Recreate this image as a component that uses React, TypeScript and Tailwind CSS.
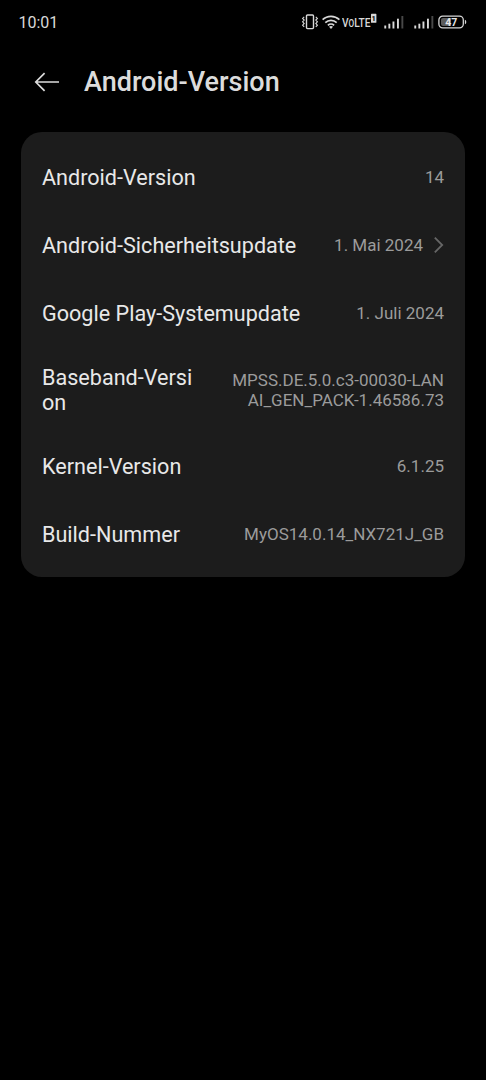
import React from "react";

interface InfoRow {
  label: string;
  value: string;
  link?: boolean;
  tall?: boolean;
}

const rows: InfoRow[] = [
  { label: "Android-Version", value: "14" },
  { label: "Android-Sicherheitsupdate", value: "1. Mai 2024", link: true },
  { label: "Google Play-Systemupdate", value: "1. Juli 2024" },
  { label: "Baseband-Version", value: "MPSS.DE.5.0.c3-00030-LANAI_GEN_PACK-1.46586.73", tall: true },
  { label: "Kernel-Version", value: "6.1.25" },
  { label: "Build-Nummer", value: "MyOS14.0.14_NX721J_GB" },
];

const VibrateIcon = () => (
  <svg width="18" height="18" viewBox="0 0 18 18" fill="none" stroke="#d8d8d8" strokeWidth="1.4">
    <rect x="5.5" y="2" width="7" height="13.6" rx="1" />
    <path d="M3.2 3.8 1.6 5.4l1.6 1.7-1.6 1.7 1.6 1.7-1.6 1.7 1.6 1.6" strokeWidth="1.1" />
    <path d="M14.8 3.8l1.6 1.6-1.6 1.7 1.6 1.7-1.6 1.7 1.6 1.7-1.6 1.6" strokeWidth="1.1" />
  </svg>
);

const WifiIcon = () => (
  <svg width="20" height="18" viewBox="0 0 20 18" fill="none" stroke="#d8d8d8" strokeWidth="1.7">
    <path d="M1.6 6.7a12.2 12.2 0 0 1 16.8 0" />
    <path d="M4.3 9.7a8.2 8.2 0 0 1 11.4 0" />
    <path d="M6.9 12.4a4.5 4.5 0 0 1 6.2 0" />
    <path d="M10 16 8 13.8a3 3 0 0 1 4 0z" fill="#d8d8d8" stroke="none" />
  </svg>
);

const SignalIcon = () => (
  <svg width="20" height="14" viewBox="0 0 20 14" fill="#d8d8d8">
    <rect x="0.3" y="10.5" width="1.9" height="3" />
    <rect x="4.4" y="8.7" width="1.9" height="4.8" />
    <rect x="8.5" y="6.5" width="1.9" height="7" />
    <rect x="13" y="3.7" width="1.9" height="9.8" />
    <rect x="17.4" y="1" width="1.9" height="12.5" fill="#484848" />
  </svg>
);

const BatteryIcon = () => (
  <svg width="29" height="14" viewBox="0 0 29 14">
    <rect x="0.9" y="1.1" width="24.4" height="11.8" rx="3.8" fill="none" stroke="#d8d8d8" strokeWidth="1.3" />
    <path d="M5 3h8v8H5a2 2 0 0 1-2-2V5a2 2 0 0 1 2-2z" fill="#5c5c5c" />
    <path d="M26.9 4.8q1.4.4 1.4 2.2t-1.4 2.2z" fill="#d8d8d8" />
    <text x="13.2" y="10.8" textAnchor="middle" fill="#e6e6e6" className="text-[10.5px] font-bold">
      47
    </text>
  </svg>
);

const StatusBar = () => (
  <div className="flex h-[43px] items-center pr-[19px] pl-[18.5px] text-[#d8d8d8]">
    <span className="grow pt-0.5 text-[16px] leading-5">10:01</span>
    <VibrateIcon />
    <span className="ml-0.5 flex">
      <WifiIcon />
    </span>
    <svg className="ml-px" width="36" height="20" viewBox="0 0 36 20" fill="#d8d8d8">
      <text x="0" y="15.3" textLength="28.5" lengthAdjust="spacingAndGlyphs" className="font-medium">
        <tspan className="text-[13px]">V</tspan>
        <tspan className="text-[10.5px]">O</tspan>
        <tspan className="text-[13px]">LTE</tspan>
      </text>
      <rect x="29" y="1.8" width="5.4" height="9" rx="0.6" />
      <text x="31.7" y="9" textAnchor="middle" fill="#000" className="text-[7.5px] font-bold">
        1
      </text>
    </svg>
    <span className="ml-[6px]">
      <SignalIcon />
    </span>
    <span className="ml-[10px]">
      <SignalIcon />
    </span>
    <span className="ml-1">
      <BatteryIcon />
    </span>
  </div>
);

const Row: React.FC<InfoRow> = ({ label, value, link, tall }) => (
  <div className={`flex items-center justify-between ${tall ? "h-[85px]" : "h-[68px]"}`}>
    <span className={`text-[21.6px] leading-[25px] text-[#e8e8e8] ${tall ? "w-[154px] break-all" : "whitespace-nowrap"}`}>
      {label}
    </span>
    <span className={`flex items-center text-right text-[17px] leading-5 text-[#9b9b9b] ${tall ? "w-[213px] break-all" : "whitespace-nowrap"}`}>
      {value}
      {link && (
        <svg className="ml-2.5" width="11" height="18" viewBox="0 0 11 18" fill="none" stroke="#666" strokeWidth="1.8">
          <path d="M1.8 1.6 9.2 9l-7.4 7.4" />
        </svg>
      )}
    </span>
  </div>
);

export default function App() {
  return (
    <div className="h-[1080px] w-[486px] overflow-hidden bg-black font-['Roboto',sans-serif]">
      <StatusBar />
      <header className="flex h-[89px] items-start pt-[22px] pl-[34px]">
        <svg className="mt-[7px]" width="26" height="20" viewBox="0 0 26 20" fill="none" stroke="#dcdcdc" strokeWidth="1.7">
          <path d="M25 10H1.8M10.6 1.2 1.8 10l8.8 8.8" />
        </svg>
        <h1 className="ml-6 text-[27px] leading-[34px] font-medium text-[#dcdcdc]">Android-Version</h1>
      </header>
      <main className="mx-[21px] h-[445px] rounded-[21px] bg-[#1c1c1c] px-[21px] pt-[11px]">
        {rows.map((row) => (
          <Row key={row.label} {...row} />
        ))}
      </main>
    </div>
  );
}
